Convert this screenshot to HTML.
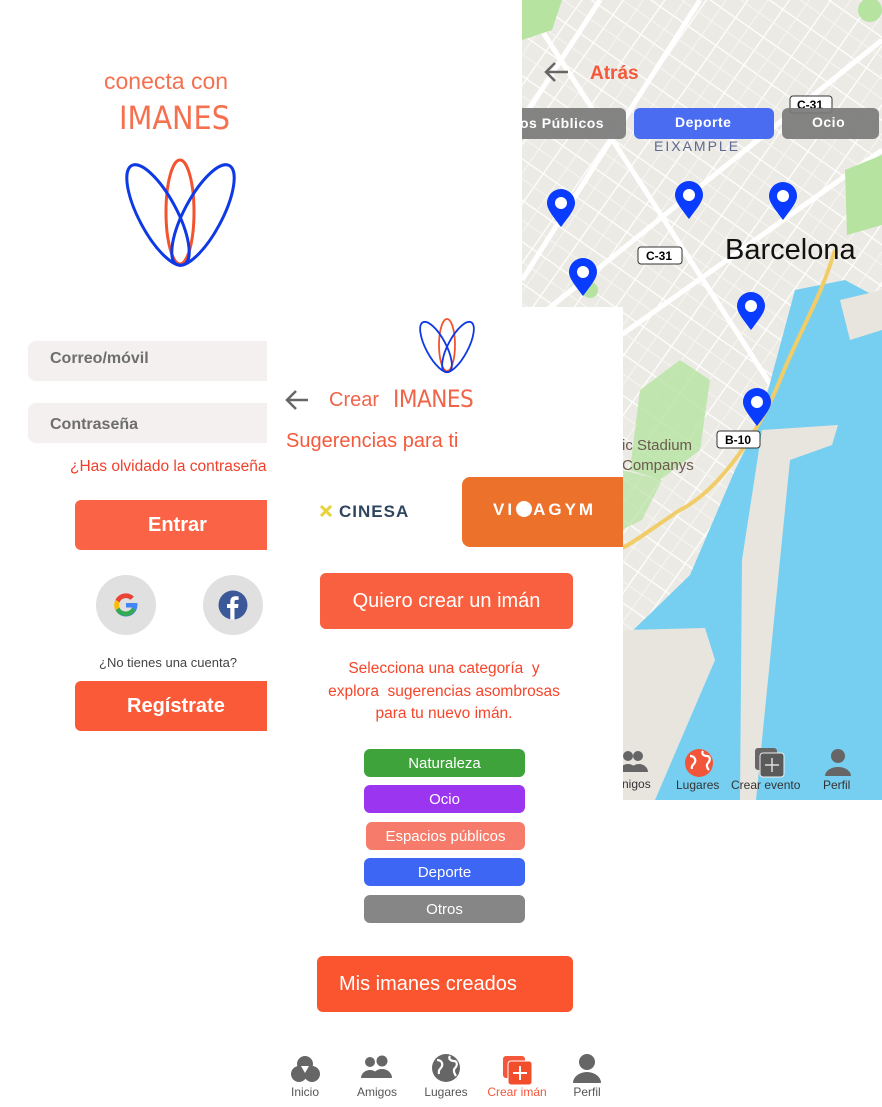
<!DOCTYPE html>
<html><head><meta charset="utf-8"><style>
*{margin:0;padding:0;box-sizing:border-box}
body{width:882px;height:1107px;position:relative;overflow:hidden;background:#fff;font-family:"Liberation Sans","DejaVu Sans",sans-serif}
.a{position:absolute}
.t{position:absolute;white-space:nowrap}
.btn{position:absolute;color:#fff;display:flex;align-items:center;justify-content:center;border-radius:6px}
.chip{position:absolute;left:364px;width:161px;height:28px;border-radius:6px;color:#fff;font-size:15px;display:flex;align-items:center;justify-content:center}
.nl{position:absolute;font-size:12px;color:#555;text-align:center;width:70px}
</style></head><body>

<!-- MAP -->
<svg class="a" style="left:522px;top:0" width="360" height="800" viewBox="522 0 360 800">
<defs>
<pattern id="st" width="34" height="34" patternUnits="userSpaceOnUse" patternTransform="rotate(35)">
<rect width="34" height="34" fill="#eceae4"/>
<path d="M0 0H34M0 0V34" stroke="#fff" stroke-width="2.5"/>
<path d="M0 17H34M17 0V34" stroke="#f7f6f3" stroke-width="1"/>
</pattern>
</defs>
<rect x="522" y="0" width="360" height="800" fill="url(#st)"/>
<path d="M522 0 L800 430 M600 0 L522 120 M700 0 L522 280 M882 40 L522 330 M882 150 L600 350" stroke="#fff" stroke-width="5"/>
<g fill="#b6e3a0">
<path d="M522 0h40l-10 30-30 10z"/><path d="M845 170l37-15v70l-35 10z"/><path d="M640 390l40-30 30 20-10 70-40 30-30-10z" opacity=".8"/>
<path d="M622 470l40 10-20 40-20 10z" opacity=".7"/><circle cx="590" cy="290" r="8"/><circle cx="870" cy="10" r="12"/>
</g>
<path d="M795 290 L845 280 L882 300 L882 800 L623 800 L623 640 L690 575 L735 470 L760 420 Z" fill="#76cff0"/>
<path d="M762 430 L838 425 L832 445 L790 460 L756 800 L740 800 L742 560 Z" fill="#e8e5df"/>
<path d="M623 630 L705 628 L715 660 L655 800 L623 800 Z" fill="#e8e5df"/>
<path d="M840 300 L882 290 L882 330 L850 340 Z" fill="#e8e5df"/>
<path d="M835 250 C820 300 800 330 780 380 C760 430 720 490 680 510 C650 530 630 545 622 548" stroke="#f1cd6a" stroke-width="4" fill="none"/>
<g font-family="Liberation Sans,sans-serif" font-weight="bold" font-size="12">
<rect x="790" y="96" width="42" height="17" rx="3" fill="#fff" stroke="#333"/><text x="797" y="109">C-31</text>
<rect x="638" y="247" width="44" height="17" rx="3" fill="#fff" stroke="#333"/><text x="646" y="260">C-31</text>
<rect x="717" y="431" width="43" height="17" rx="3" fill="#fff" stroke="#333"/><text x="725" y="444">B-10</text>
</g>
<text x="654" y="151" font-size="14" letter-spacing="2" fill="#5f6890" font-family="Liberation Sans,sans-serif">EIXAMPLE</text>
<text x="725" y="259" font-size="29" fill="#111" font-family="Liberation Sans,sans-serif">Barcelona</text>
<text x="622" y="450" font-size="15" fill="#6a5a50" font-family="Liberation Sans,sans-serif">ic Stadium</text>
<text x="622" y="470" font-size="15" fill="#6a5a50" font-family="Liberation Sans,sans-serif">Companys</text>
<g fill="#0a3cff">
<g transform="translate(561,227)"><path d="M0 0C-9-12-14-18-14-24A14 14 0 0 1 14-24C14-18 9-12 0 0Z"/><circle cy="-24" r="6" fill="#fff"/></g>
<g transform="translate(689,219)"><path d="M0 0C-9-12-14-18-14-24A14 14 0 0 1 14-24C14-18 9-12 0 0Z"/><circle cy="-24" r="6" fill="#fff"/></g>
<g transform="translate(783,220)"><path d="M0 0C-9-12-14-18-14-24A14 14 0 0 1 14-24C14-18 9-12 0 0Z"/><circle cy="-24" r="6" fill="#fff"/></g>
<g transform="translate(583,296)"><path d="M0 0C-9-12-14-18-14-24A14 14 0 0 1 14-24C14-18 9-12 0 0Z"/><circle cy="-24" r="6" fill="#fff"/></g>
<g transform="translate(751,330)"><path d="M0 0C-9-12-14-18-14-24A14 14 0 0 1 14-24C14-18 9-12 0 0Z"/><circle cy="-24" r="6" fill="#fff"/></g>
<g transform="translate(757,426)"><path d="M0 0C-9-12-14-18-14-24A14 14 0 0 1 14-24C14-18 9-12 0 0Z"/><circle cy="-24" r="6" fill="#fff"/></g>
</g>
<path d="M568 72H546M555 63l-9 9 9 9" stroke="#666" stroke-width="2.5" fill="none"/>
<text x="590" y="79" font-size="19" font-weight="bold" fill="#f5583a" font-family="Liberation Sans,sans-serif">Atrás</text>
<rect x="500" y="108" width="126" height="31" rx="6" fill="#7a7a7a" opacity=".92"/>
<rect x="634" y="108" width="140" height="31" rx="6" fill="#4a6cf0"/>
<rect x="782" y="108" width="97" height="31" rx="6" fill="#7a7a7a" opacity=".92"/>
<g font-size="14" font-weight="bold" fill="#fff" font-family="Liberation Sans,sans-serif" letter-spacing=".5">
<text x="520" y="128">os Públicos</text><text x="675" y="127">Deporte</text><text x="812" y="127">Ocio</text></g>
<g fill="#666">
<circle cx="628" cy="756" r="5"/><path d="M619 772a9 8 0 0 1 18 0z"/><circle cx="638" cy="756" r="5"/><path d="M630 772a9 8 0 0 1 18 0z"/>
<rect x="755" y="748" width="22" height="22" rx="3"/><rect x="760" y="753" width="24" height="24" rx="3" fill="#5a5a5a" stroke="#eee" stroke-width="1"/>
<path d="M772 758v14M765 765h14" stroke="#ddd" stroke-width="1.5"/>
<circle cx="838" cy="756" r="7"/><path d="M825 776a13 9 0 0 1 26 0z"/>
</g>
<circle cx="699" cy="763" r="14" fill="#f2553a"/>
<path d="M690 756c4 0 6 3 5 6s-4 3-3 7M703 751c-2 3 1 5 4 5s4 4 1 7c-2 2-1 5 1 7" stroke="#fff" stroke-width="2.2" fill="none"/>
<g font-size="12" fill="#333" font-family="Liberation Sans,sans-serif">
<text x="622" y="788">nigos</text><text x="676" y="789">Lugares</text><text x="731" y="789">Crear evento</text><text x="823" y="789">Perfil</text></g>
</svg>

<!-- LOGIN -->
<div class="t" style="left:104px;top:68px;font-size:23px;color:#f5704f">conecta con</div>
<div class="t" style="left:119px;top:99px;font-size:32px;color:#f5704f;letter-spacing:0px;font-family:'DejaVu Sans Condensed','Liberation Sans Narrow',sans-serif;font-weight:200">IMANES</div>
<svg class="a" style="left:120px;top:155px" width="120" height="115" viewBox="120 155 120 115">
<ellipse cx="180" cy="212" rx="14" ry="52" fill="none" stroke="#f4532f" stroke-width="3"/>
<ellipse cx="158" cy="215" rx="56" ry="19" transform="rotate(62 158 215)" fill="none" stroke="#0e3ae6" stroke-width="3"/>
<ellipse cx="203" cy="215" rx="56" ry="19" transform="rotate(-62 203 215)" fill="none" stroke="#0e3ae6" stroke-width="3"/>
</svg>
<div class="a" style="left:28px;top:341px;width:260px;height:40px;background:#f3f0ef;border-radius:8px"></div>
<div class="t" style="left:50px;top:350px;font-size:16px;color:#6e6e6e;font-weight:bold">Correo/móvil</div>
<div class="a" style="left:28px;top:403px;width:260px;height:40px;background:#f3f0ef;border-radius:8px"></div>
<div class="t" style="left:50px;top:416px;font-size:16px;color:#6e6e6e;font-weight:bold">Contraseña</div>
<div class="t" style="left:70px;top:458px;font-size:15.5px;color:#f0402c">¿Has olvidado la contraseña?</div>
<div class="btn" style="left:75px;top:500px;width:205px;height:50px;background:#fa6345;font-size:20px;font-weight:bold;justify-content:flex-start;padding-left:73px">Entrar</div>
<div class="a" style="left:96px;top:575px;width:60px;height:60px;border-radius:50%;background:#e0e0e0"></div>
<svg class="a" style="left:111px;top:590px" width="30" height="30" viewBox="0 0 30 30">
<path d="M25 13H15v4.5h6c-.8 3-3.3 4.5-6 4.5a7 7 0 0 1 0-14c1.8 0 3.4.7 4.6 1.8l3.2-3.2A11.5 11.5 0 1 0 26.5 15c0-.7-.1-1.4-.2-2z" fill="#4285f4"/>
<path d="M4.5 9.7A11.5 11.5 0 0 1 22.8 6.6l-3.2 3.2A7 7 0 0 0 8.5 12.3z" fill="#ea4335"/>
<path d="M4.5 9.7l4 2.6a7 7 0 0 0 0 5.4l-4 2.6a11.5 11.5 0 0 1 0-10.6z" fill="#fbbc05"/>
<path d="M4.5 20.3l4-2.6A7 7 0 0 0 21 17.5l3.5 2.7A11.5 11.5 0 0 1 4.5 20.3z" fill="#34a853"/>
</svg>
<div class="a" style="left:203px;top:575px;width:60px;height:60px;border-radius:50%;background:#e0e0e0"></div>
<svg class="a" style="left:218px;top:590px" width="30" height="30" viewBox="0 0 30 30"><circle cx="15" cy="15" r="14.5" fill="#3b5998"/><path d="M16.5 29.5V18h3.5l.5-4h-4v-2.3c0-1.1.4-1.8 1.9-1.8h2.2V6.4c-.4 0-1.7-.2-3.2-.2-3.2 0-5.1 1.9-5.1 5.3V14H9v4h3.3v11.5z" fill="#fff"/></svg>
<div class="t" style="left:99px;top:655px;font-size:13px;color:#444">¿No tienes una cuenta?</div>
<div class="btn" style="left:75px;top:681px;width:205px;height:50px;background:#fb5a38;font-size:20px;font-weight:bold;justify-content:flex-start;padding-left:52px">Regístrate</div>

<!-- CENTER PANEL -->
<div class="a" style="left:267px;top:307px;width:356px;height:800px;background:#fff"></div>
<div class="a" style="left:267px;top:800px;width:615px;height:307px;background:#fff"></div>
<svg class="a" style="left:415px;top:317px" width="62" height="58" viewBox="415 317 62 58">
<ellipse cx="447" cy="345" rx="8" ry="26" fill="none" stroke="#f4532f" stroke-width="1.8"/>
<ellipse cx="436" cy="347" rx="28" ry="10" transform="rotate(62 436 347)" fill="none" stroke="#0e3ae6" stroke-width="1.8"/>
<ellipse cx="458" cy="347" rx="28" ry="10" transform="rotate(-62 458 347)" fill="none" stroke="#0e3ae6" stroke-width="1.8"/>
</svg>
<svg class="a" style="left:284px;top:388px" width="26" height="24"><path d="M24 12H3M12 3l-9 9 9 9" stroke="#666" stroke-width="2.5" fill="none"/></svg>
<div class="t" style="left:329px;top:389px;font-size:20px;color:#f0654a">Crear</div>
<div class="t" style="left:393px;top:385px;font-size:24px;color:#f0654a;letter-spacing:-0.5px;font-family:'DejaVu Sans Condensed',sans-serif;font-weight:200">IMANES</div>
<div class="t" style="left:286px;top:430px;font-size:20px;color:#f25a3c">Sugerencias para ti</div>
<svg class="a" style="left:318px;top:503px" width="16" height="16" viewBox="0 0 16 16"><path d="M3 3l10 10M13 3L3 13" stroke="#e8d23a" stroke-width="3"/></svg>
<div class="t" style="left:339px;top:502px;font-size:17px;font-weight:bold;color:#2f4560;letter-spacing:1px">CINESA</div>
<div class="a" style="left:462px;top:477px;width:161px;height:70px;background:#ec722c;border-radius:8px 0 0 8px"></div>
<div class="t" style="left:493px;top:500px;font-size:17px;font-weight:bold;color:#fff;letter-spacing:3px">VI<span style="display:inline-block;width:16px;height:16px;border-radius:50%;background:#fff;vertical-align:-2px;margin:0 1px"></span>AGYM</div>
<div class="btn" style="left:320px;top:573px;width:253px;height:56px;background:#f9603f;font-size:20px">Quiero crear un imán</div>
<div class="a" style="left:300px;top:658px;width:288px;text-align:center;font-size:15.5px;line-height:22.5px;color:#f5452a">Selecciona una categoría&nbsp; y<br>explora&nbsp; sugerencias asombrosas<br>para tu nuevo imán.</div>
<div class="chip" style="top:749px;background:#3ea33a">Naturaleza</div>
<div class="chip" style="top:785px;background:#9b35f0">Ocio</div>
<div class="chip" style="top:822px;left:366px;width:159px;background:#f77b6a">Espacios públicos</div>
<div class="chip" style="top:858px;background:#3e66f5">Deporte</div>
<div class="chip" style="top:895px;background:#868686">Otros</div>
<div class="btn" style="left:317px;top:956px;width:256px;height:56px;background:#fb5530;font-size:20px;justify-content:flex-start;padding-left:22px">Mis imanes creados</div>

<svg class="a" style="left:280px;top:1050px" width="340" height="36" viewBox="280 1050 340 36">
<g fill="#666">
<circle cx="305" cy="1064" r="8"/><circle cx="299" cy="1074" r="8"/><circle cx="312" cy="1074" r="8"/>
<path d="M301 1066h8l-4 7z" fill="#fff"/>
<circle cx="370" cy="1062" r="5"/><circle cx="382" cy="1061" r="5.5"/><path d="M361 1078a9 8 0 0 1 18 0z"/><path d="M372 1078a10 9 0 0 1 20 0z"/>
<circle cx="446" cy="1068" r="14"/>
<circle cx="587" cy="1062" r="8"/><path d="M573 1083a14 11 0 0 1 28 0z"/>
</g>
<path d="M437 1060c4 0 6 3 5 6s-4 3-3 8M450 1056c-2 3 1 5 4 5s4 4 1 7c-2 2-1 5 1 8" stroke="#fff" stroke-width="2.2" fill="none"/>
<rect x="503" y="1056" width="22" height="22" rx="3" fill="#f4573a"/>
<rect x="508" y="1061" width="24" height="24" rx="3" fill="#f24e2c" stroke="#fff" stroke-width="1"/>
<path d="M520 1066v14M513 1073h14" stroke="#fff" stroke-width="2"/>
</svg>
<div class="nl" style="left:270px;top:1085px">Inicio</div>
<div class="nl" style="left:342px;top:1085px">Amigos</div>
<div class="nl" style="left:411px;top:1085px">Lugares</div>
<div class="nl" style="left:481px;top:1085px;color:#f4573a;width:72px">Crear imán</div>
<div class="nl" style="left:552px;top:1085px">Perfil</div>
</body></html>
